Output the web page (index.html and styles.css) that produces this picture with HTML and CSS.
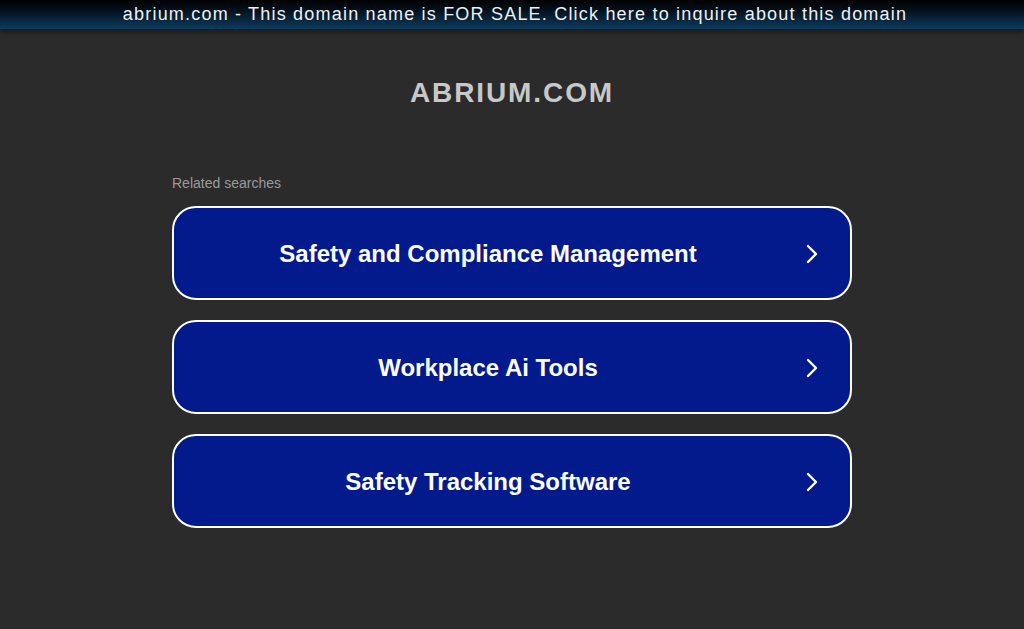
FILE: index.html
```html
<!DOCTYPE html>
<html>
<head>
<meta charset="utf-8">
<link rel="stylesheet" href="styles.css">
</head>
<body>
<div class="topbar">abrium.com - This domain name is FOR SALE. Click here to inquire about this domain</div>
<div class="container">
  <h1 class="title">ABRIUM.COM</h1>
  <div class="related">Related searches</div>
  <div class="list">
    <a class="btn"><span class="label">Safety and Compliance Management</span><svg class="chev" width="14" height="22" viewBox="0 0 14 22"><path d="M3 3 L11 11 L3 19" fill="none" stroke="#fff" stroke-width="2.4" stroke-linecap="round" stroke-linejoin="round"/></svg></a>
    <a class="btn"><span class="label">Workplace Ai Tools</span><svg class="chev" width="14" height="22" viewBox="0 0 14 22"><path d="M3 3 L11 11 L3 19" fill="none" stroke="#fff" stroke-width="2.4" stroke-linecap="round" stroke-linejoin="round"/></svg></a>
    <a class="btn"><span class="label">Safety Tracking Software</span><svg class="chev" width="14" height="22" viewBox="0 0 14 22"><path d="M3 3 L11 11 L3 19" fill="none" stroke="#fff" stroke-width="2.4" stroke-linecap="round" stroke-linejoin="round"/></svg></a>
  </div>
</div>
</body>
</html>
```
FILE: styles.css
```css
html, body {
  margin: 0;
  padding: 0;
  background: #2b2b2b;
  font-family: "Liberation Sans", Arial, sans-serif;
  height: 100%;
}
.topbar {
  height: 29px;
  line-height: 28px;
  padding-left: 6px;
  text-align: center;
  color: #f0f0f0;
  font-size: 18px;
  letter-spacing: 1.2px;
  background: linear-gradient(to bottom, #000000 0%, #03101c 35%, #0c3c5e 100%);
  box-shadow: 0 2px 5px rgba(0,0,0,0.6);
}
.container {
  width: 680px;
  margin: 0 auto;
}
.title {
  margin: 48px 0 0 0;
  height: 32px;
  line-height: 32px;
  text-align: center;
  font-size: 28px;
  font-weight: bold;
  letter-spacing: 1.9px;
  color: #c8c8c8;
}
.related {
  margin-top: 66px;
  font-size: 14px;
  color: #9a9a9a;
  line-height: 16px;
}
.list {
  margin-top: 15px;
  display: flex;
  flex-direction: column;
  gap: 20px;
}
.btn {
  position: relative;
  box-sizing: border-box;
  height: 94px;
  border: 2px solid #ffffff;
  border-radius: 24px;
  background: #021a8b;
  display: flex;
  align-items: center;
  justify-content: center;
  color: #ffffff;
  font-size: 24px;
  font-weight: bold;
  padding-right: 48px;
  padding-top: 2px;
}
.chev {
  position: absolute;
  right: 31px;
  top: 35px;
}
```
